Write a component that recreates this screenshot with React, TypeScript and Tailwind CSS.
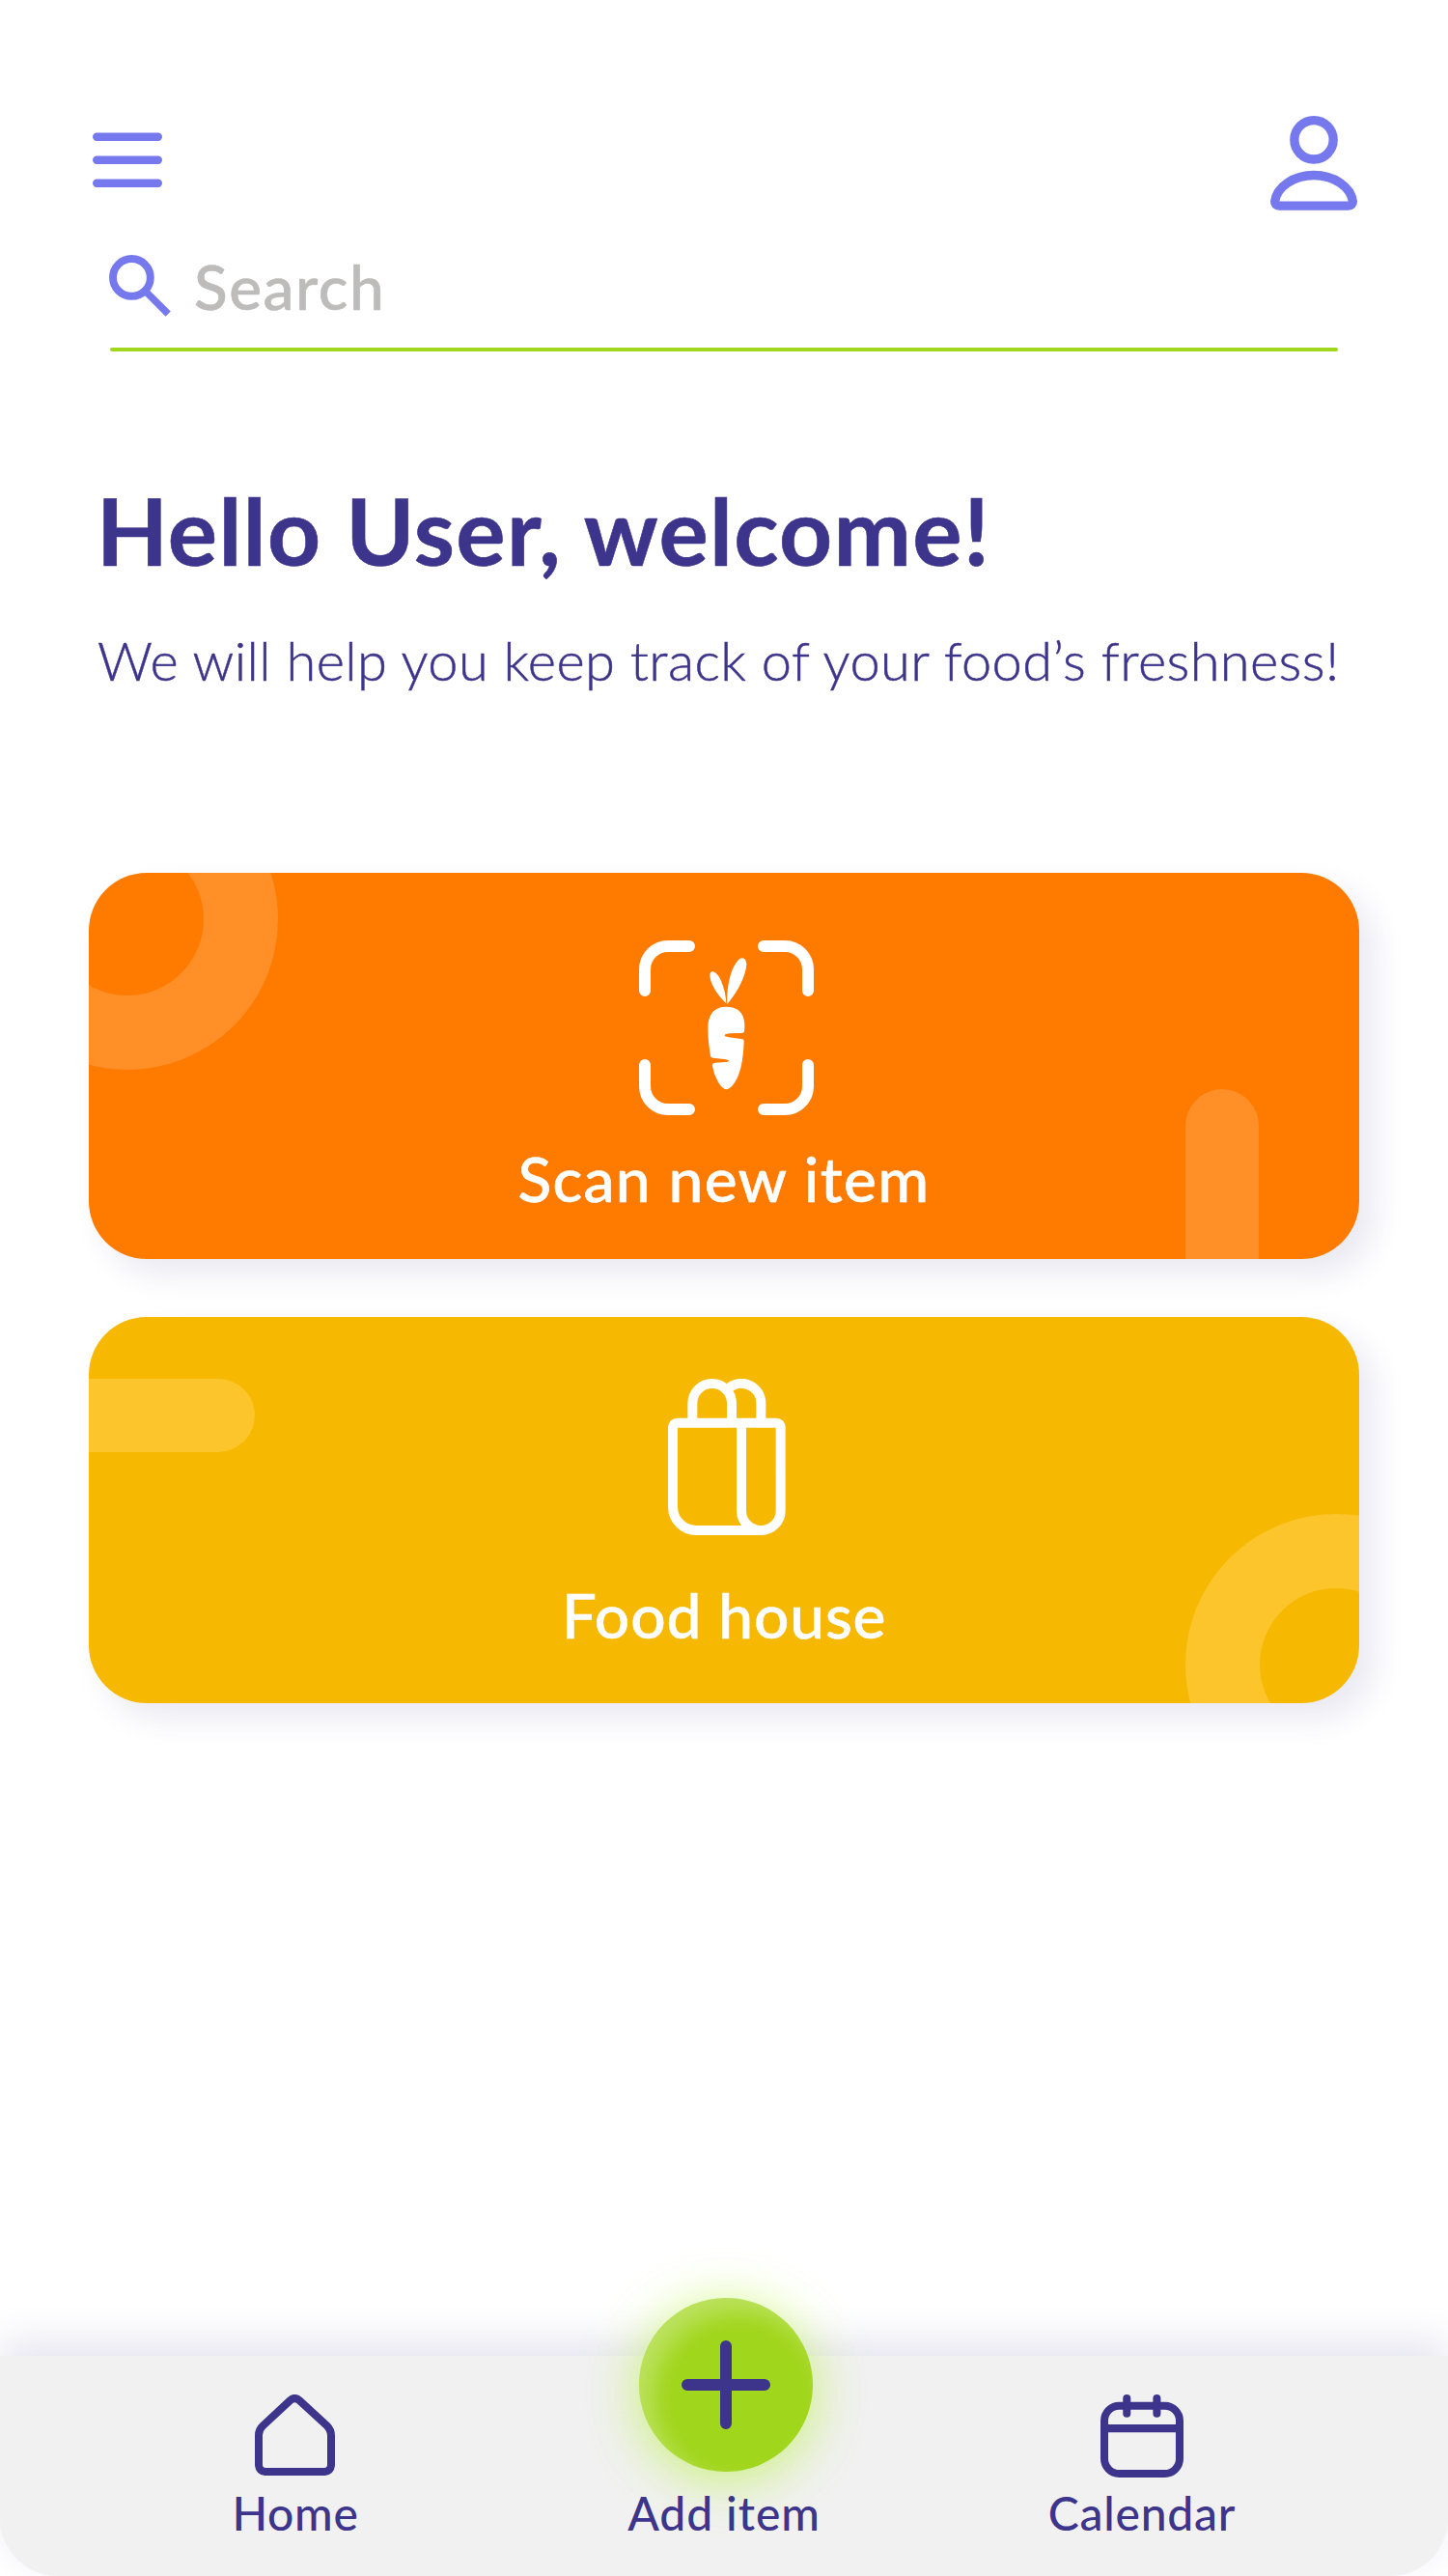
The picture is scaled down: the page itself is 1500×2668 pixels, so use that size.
import React from 'react';

function MenuIcon() {
  return (
    <svg className="mt-[17px] h-[58px] w-[72px]" viewBox="0 0 72 58" fill="none" stroke="#7678ed" strokeWidth="8.4" strokeLinecap="round">
      <path d="M4.2 4.7H67.8M4.2 28.7H67.8M4.2 52.7H67.8" />
    </svg>
  );
}

function UserIcon() {
  return (
    <svg className="h-[98px] w-[90px]" viewBox="348 90 270 294" fill="none" stroke="#7678ed" strokeWidth="28">
      <circle cx="483" cy="164.5" r="60.5" />
      <path d="M376 369.5H590Q604 369 604 356C598 310 545 274.5 483 274.5C421 274.5 368 310 362 356Q362 369 376 369.5Z" />
    </svg>
  );
}

function SearchIcon() {
  return (
    <svg className="mt-[9px] h-[65px] w-[64px] shrink-0" viewBox="113 264 64 65" fill="none" stroke="#7678ed">
      <circle cx="136.4" cy="287.4" r="19.4" strokeWidth="7.9" />
      <path d="M150.5 301.5L174.2 325.2" strokeWidth="7.4" />
    </svg>
  );
}

function ScanIcon() {
  return (
    <svg className="ml-[5px] h-[181px] w-[181px]" viewBox="486 72 543 543" fill="none">
      <g stroke="#fff" strokeWidth="36" strokeLinecap="round">
        <path d="M504 228V162A72 72 0 0 1 576 90H642" />
        <path d="M873 90H939A72 72 0 0 1 1011 162V228" />
        <path d="M1011 459V525A72 72 0 0 1 939 597H873" />
        <path d="M642 597H576A72 72 0 0 1 504 525V459" />
      </g>
      <g fill="#fff">
        <path d="M757 268C735 247 709 214 706 182Q706 168 716 169C737 174 755 225 757 268Z" />
        <path d="M760 270C757 215 772 150 800 128Q817 121 820 145C818 182 795 228 760 270Z" />
        <path d="M700 350C699 303 718 278 757 278C797 278 815 303 814 340Q814 352 812 357Q810 361 800 360L770 361Q752 362 752 367Q752 371 765 373L808 379Q812 380 812 386C810 440 802 483 785 511Q770 535 757 535Q745 535 731 511Q718 487 713 458Q714 453 724 452L753 450Q765 449 765 446Q764 443 750 441L715 437Q709 436 708 431C704 405 700 375 700 350Z" />
      </g>
    </svg>
  );
}

function BagIcon() {
  return (
    <svg className="ml-[6px] h-[162px] w-[122px]" viewBox="576 84 366 486" fill="none" stroke="#fff" strokeWidth="30">
      <path d="M804 221V494A61 61 0 0 0 926 494V236Q926 221 911 221H606Q591 221 591 236V482A73 73 0 0 0 664 555H865" />
      <path d="M652 221V160A61 61 0 0 1 774 160V221" />
      <path d="M766 112A61 61 0 0 1 865 160V221" />
    </svg>
  );
}

function HomeIcon() {
  return (
    <svg className="-ml-[2px] h-[84px] w-[83px]" viewBox="192 120 249 252" fill="none" stroke="#3d348b" strokeWidth="24">
      <path d="M204 246Q204 229 217 217L302 138Q316 126 330 138L416 217Q429 230 429 248V340Q427 358 409 360H224Q206 358 204 340Z" />
    </svg>
  );
}

function CalendarIcon() {
  return (
    <svg className="h-[86px] w-[86px]" viewBox="240 240 257 257" fill="none" stroke="#3d348b" strokeWidth="24">
      <rect x="252" y="275" width="233" height="210" rx="46" />
      <path d="M252 345H485" />
      <path d="M321.5 252V299M414.5 252V299" strokeLinecap="round" />
    </svg>
  );
}

function PlusIcon() {
  return (
    <svg className="h-[92px] w-[92px]" viewBox="0 0 92 92" fill="none" stroke="#3d348b" strokeWidth="12" strokeLinecap="round">
      <path d="M46 6V86M6 46H86" />
    </svg>
  );
}

export default function App() {
  return (
    <div className="flex h-[2668px] w-[1500px] flex-col overflow-hidden bg-white font-['Lato','Noto_Sans',sans-serif] text-[#3d348b]">
      <header className="flex h-[255px] items-start justify-between pt-[120px] pr-[94px] pl-[96px]">
        <button aria-label="Menu"><MenuIcon /></button>
        <button aria-label="Profile"><UserIcon /></button>
      </header>

      <div className="ml-[113px] flex h-[105px] items-start gap-[24px]">
        <SearchIcon />
        <span className="mt-[2px] text-[64px] leading-[80px] font-medium tracking-[1.5px] text-[#bdbcbb] [-webkit-text-stroke:0.6px_#bdbcbb]">Search</span>
      </div>
      <div className="ml-[114px] h-1 w-[1272px] shrink-0 rounded-full bg-[#a0d61b]" />

      <section className="mt-[127px] flex h-[413px] flex-col pl-[100px] whitespace-nowrap">
        <h1 className="text-[96px] leading-[116px] font-bold tracking-[1.37px] [-webkit-text-stroke:0.6px_#3d348b]">Hello User, welcome!</h1>
        <p className="mt-[43px] pl-px text-[56px] leading-[68px] font-light tracking-[0.37px] [-webkit-text-stroke:0.5px_#3d348b]">
          We will help you keep track of your food’s freshness!
        </p>
      </section>

      <main className="flex flex-1 flex-col gap-[60px] px-[92px]">
        <div className="rounded-[60px] shadow-[16px_16px_32px_rgba(61,52,139,0.11)]">
          <div className="relative flex h-[400px] flex-col items-center overflow-hidden rounded-[60px] bg-[#ff7b00] pt-[70px]">
            <div className="absolute -top-[108px] -left-[116px] size-[312px] rounded-full border-[77px] border-[#ff8f26]" />
            <div className="absolute top-[224px] left-[1136px] h-[176px] w-[76px] rounded-t-full bg-[#ff8f26]" />
            <ScanIcon />
            <span className="mt-[26px] text-[64px] leading-[80px] font-medium tracking-[1.36px] text-white [-webkit-text-stroke:0.6px_#fff]">Scan new item</span>
          </div>
        </div>
        <div className="rounded-[60px] shadow-[16px_16px_32px_rgba(61,52,139,0.11)]">
          <div className="relative flex h-[400px] flex-col items-center overflow-hidden rounded-[60px] bg-[#f7b801] pt-[64px]">
            <div className="absolute top-[64px] left-0 h-[76px] w-[172px] rounded-r-full bg-[#fcc52b]" />
            <div className="absolute top-[204px] left-[1136px] size-[312px] rounded-full border-[77px] border-[#fcc52b]" />
            <BagIcon />
            <span className="mt-[43px] text-[64px] leading-[80px] font-medium tracking-[0.87px] text-white [-webkit-text-stroke:0.6px_#fff]">Food house</span>
          </div>
        </div>
      </main>

      <nav className="grid h-[228px] grid-cols-[612px_276px_590px] rounded-b-[60px] bg-[#f1f1f1] text-[48px] leading-[58px] font-medium shadow-[0_-16px_40px_rgba(61,52,139,0.13)]">
        <div className="flex flex-col items-center pt-[40px]">
          <HomeIcon />
          <span className="mt-[10px] tracking-[0.67px]">Home</span>
        </div>
        <div className="-mt-[60px] flex flex-col items-center">
          <button aria-label="Add item" className="ml-1 flex size-[180px] items-center justify-center rounded-full bg-[#a0d61b] shadow-[0_8px_56px_rgba(172,240,30,0.6),inset_14px_14px_24px_rgba(255,255,255,0.3)]">
            <PlusIcon />
          </button>
          <span className="mt-[14px] tracking-[0.92px]">Add item</span>
        </div>
        <div className="flex flex-col items-center pt-[40px]">
          <CalendarIcon />
          <span className="mt-[8px] tracking-[0.76px]">Calendar</span>
        </div>
      </nav>
    </div>
  );
}
